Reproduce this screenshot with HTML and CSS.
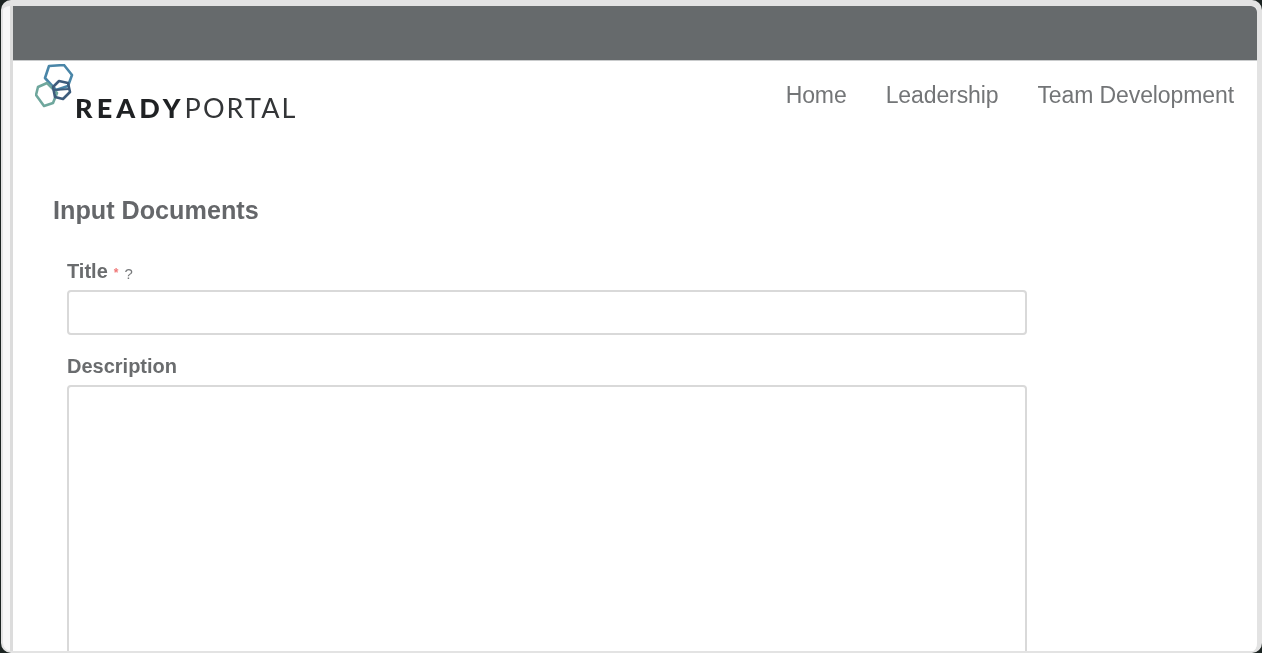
FILE: index.html
```html
<!DOCTYPE html>
<html lang="en">
<head>
<meta charset="utf-8">
<title>ReadyPortal</title>
<link rel="stylesheet" href="styles.css">
</head>
<body>
<div class="window">
  <div class="panel">
    <div class="topbar"></div>
    <header class="header">
      <div class="logo">
        <svg class="logo-mark" width="40" height="44" viewBox="0 0 40 44" fill="none" aria-hidden="true">
          <path d="M14 2 L29 1 L37 11 L33 22 L21 26 L10 14 Z" stroke="#4a86a8" stroke-width="2.6" stroke-linejoin="round"/>
          <path d="M3 23 L12 19 L22 29 L18 39 L9 42 L1 31 Z" stroke="#6fa79d" stroke-width="2.6" stroke-linejoin="round"/>
          <path d="M18 23 L24 17 L33 19 L35 28 L28 35 L20 33 Z" stroke="#3d5c7c" stroke-width="2.6" stroke-linejoin="round"/>
          <path d="M19 26 L34 25" stroke="#3d5c7c" stroke-width="2"/>
        </svg>
        <span class="logo-text"><b>READY</b>PORTAL</span>
      </div>
      <nav class="nav">
        <a>Home</a>
        <a>Leadership</a>
        <a>Team Development</a>
      </nav>
    </header>
    <main class="content">
      <h1 class="page-title">Input Documents</h1>
      <form class="form">
        <div class="field">
          <label class="field-label">Title<span class="req">*</span><span class="help">?</span></label>
          <input class="input" type="text">
        </div>
        <div class="field">
          <label class="field-label">Description</label>
          <textarea class="input area"></textarea>
        </div>
      </form>
    </main>
  </div>
</div>
</body>
</html>
```
FILE: styles.css
```css
* { box-sizing: border-box; }
html, body { height: 100%; }
body {
  margin: 0;
  height: 653px;
  overflow: hidden;
  background: #1c2422;
  font-family: "Liberation Sans", Arial, sans-serif;
  color: #6a6c6e;
}
.window {
  height: 653px;
  margin-left: 1px;
  background: #f7f7f7;
  border-style: solid;
  border-color: #e3e3e3;
  border-width: 6px 5px 2px 2px;
  border-radius: 10px;
  padding-left: 7px;
  overflow: hidden;
}
.panel { height: 100%; background: #fff; border-left: 3px solid #dcdcdc; border-top-right-radius: 6px; overflow: hidden; filter: blur(0.35px); }
.topbar { height: 55px; background: #666a6c; border-bottom: 1px solid #c9cbcc; }
.header {
  display: flex;
  justify-content: space-between;
  height: 134px;
}
.logo { position: relative; width: 300px; padding: 31px 0 0 62px; }
.logo-mark { position: absolute; left: 22px; top: 3px; }
.logo-text {
  font-family: Lato, sans-serif;
  font-size: 27px;
  line-height: 32px;
  letter-spacing: 2.1px;
  color: #333537;
  white-space: nowrap;
}
.logo-text b { font-weight: 900; letter-spacing: 4.1px; color: #1f2123; }
.nav { display: flex; gap: 39px; padding: 19px 23px 0 0; font-size: 23px; line-height: 30px; letter-spacing: -0.1px; color: #737577; }
.content { padding: 0 0 0 40px; }
.page-title { margin: 0; font-size: 25.2px; line-height: 30px; font-weight: 700; color: #65676a; }
.form { padding: 34px 0 0 14px; width: 974px; }
.field { margin-bottom: 19px; }
.field-label { display: block; height: 24px; font-size: 20px; line-height: 24px; font-weight: 700; color: #6a6c6e; margin-bottom: 7px; }
.req { font-size: 12px; color: #f07878; font-weight: 700; margin-left: 6px; vertical-align: 1px; }
.help { font-size: 15px; font-weight: 400; margin-left: 6px; color: #77797b; vertical-align: -1px; }
.input {
  display: block;
  width: 960px;
  height: 45px;
  border: 2px solid #d9d9d9;
  border-radius: 4px;
  background: #fff;
  outline: none;
  resize: none;
}
.area { height: 300px; }
```
